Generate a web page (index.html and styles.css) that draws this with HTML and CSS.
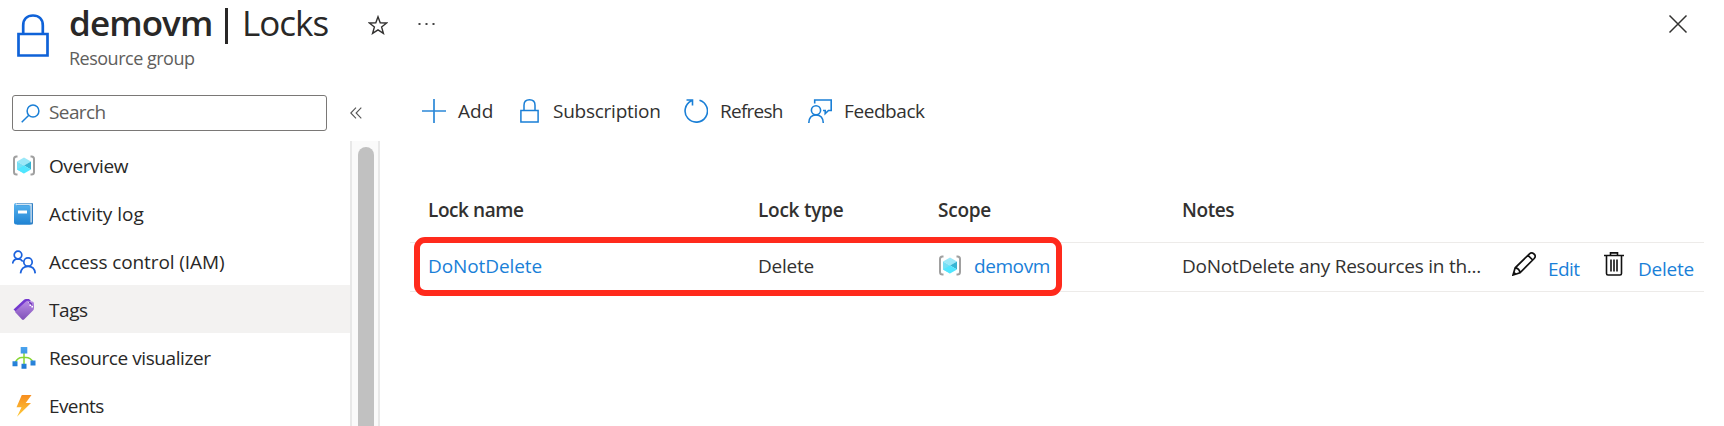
FILE: index.html
```
<!DOCTYPE html>
<html lang="en">
<head>
<meta charset="utf-8">
<title>demovm | Locks</title>
<link rel="stylesheet" href="styles.css">
</head>
<body>
<svg class="defs" width="0" height="0" aria-hidden="true">
  <defs>
    <linearGradient id="book" x1="0" y1="0" x2="0" y2="1"><stop offset="0" stop-color="#5ab4ef"/><stop offset="1" stop-color="#1f83d3"/></linearGradient>
    <linearGradient id="tag" x1="0" y1="0" x2="0" y2="1"><stop offset="0" stop-color="#b98ce6"/><stop offset="1" stop-color="#8050b8"/></linearGradient>
    <linearGradient id="node" x1="0" y1="0" x2="0" y2="1"><stop offset="0" stop-color="#4ba3ee"/><stop offset="1" stop-color="#1b77d2"/></linearGradient>
    <linearGradient id="bolt" x1="0" y1="0" x2="0" y2="1"><stop offset="0" stop-color="#f78d1e"/><stop offset="1" stop-color="#fecb3a"/></linearGradient>
    <symbol id="group" viewBox="0 0 24 24">
      <path d="M5.5 2.5H4.500Q2 2.500 2 5V18Q2 20.500 4.500 20.500H5.500M18.500 2.500H19.500Q22 2.500 22 5V18Q22 20.500 19.500 20.500H18.500" fill="none" stroke="#a0a0a0" stroke-width="2"/>
      <path d="M12 3.500 19 7.500 12 11.500 5 7.500Z" fill="#9be8f8"/>
      <path d="M5 7.500 12 11.500V19.500L5 15.500Z" fill="#76dff5"/>
      <path d="M12 11.500 19 7.500V15.500Z" fill="#35b5d4"/>
      <path d="M5 15.500 12 11.500 19 15.500 12 19.500Z" fill="#50e6ff"/>
    </symbol>
    <symbol id="padlock" viewBox="0 0 19 24">
      <path d="M.9 11.500H18.100V23.100H.9ZM4 11.500V6.200Q4 .8 9.500 .8T15 6.200V11.500" fill="none" stroke="currentColor" stroke-width="1.500"/>
    </symbol>
  </defs>
</svg>

<header class="header">
  <svg class="header-icon" viewBox="0 0 32 43"><path d="M1.500 20H30.500V41.500H1.500ZM6.200 20V11.500C6.200 5.500 10 1.500 16 1.500S25.800 5.500 25.800 11.500V20" fill="none" stroke="#0f62d8" stroke-width="2.700"/></svg>
  <div class="heading">
    <h1 class="title"><span class="title-name">demovm</span><span class="title-bar"></span><span class="title-page">Locks</span></h1>
    <p class="subtitle">Resource group</p>
  </div>
  <svg class="star" viewBox="0 0 20 20"><path d="M10 1.800 12.200 7.700 18.700 8 13.600 12 15.400 18.400 10 14.800 4.600 18.400 6.400 12 1.300 8 7.800 7.700Z" fill="none" stroke="#323130" stroke-width="1.400"/></svg>
  <svg class="more" viewBox="0 0 17 4"><path d="M.5 1h2v2h-2zM7.500 1h2v2h-2zM14.500 1h2v2h-2z" fill="#444"/></svg>
  <svg class="close" viewBox="0 0 20 20"><path d="M1.500 1.500 18.500 18.500M18.500 1.500 1.500 18.500" stroke="#323130" stroke-width="1.500"/></svg>
</header>

<div class="content">
  <aside class="sidebar">
    <div class="search-row">
      <div class="search">
        <svg class="search-icon" viewBox="0 0 19 19"><circle cx="12" cy="7" r="5.900" fill="none" stroke="#1a7fd6" stroke-width="1.500"/><path d="M7.800 11.200.7 18.300" stroke="#1a7fd6" stroke-width="1.500"/></svg>
        <span class="tight-3">Search</span>
      </div>
      <svg class="collapse" viewBox="0 0 12 12"><path d="M6 .7.8 6 6 11.300M11.300.7 6.100 6l5.200 5.300" fill="none" stroke="#555" stroke-width="1.100"/></svg>
    </div>
    <div class="nav-area">
      <nav class="nav">
        <a class="nav-item"><svg class="nav-icon" viewBox="0 0 24 24"><use href="#group"/></svg><span class="tight-2">Overview</span></a>
        <a class="nav-item"><svg class="nav-icon" viewBox="0 0 24 24"><path d="M4.500 1H20Q21 1 21 2V21Q21 22.500 19.500 22.500H5Z" fill="#2f7fc4"/><path d="M5.500 1.800H19.800V20.500H17V3H5Z" fill="#d5e3f0"/><path d="M4 3.200H17.500Q18.500 3.200 18.500 4.200V22.500H4Q2 22.500 2 20.500V3Q2 1 4 1Z" fill="url(#book)"/><path d="M4.500 1.800H19.500L18.500 3H3.700Q3.200 2.200 4.500 1.800Z" fill="#d0e4f3"/><path d="M6 8.500H15V11.500H6Z" fill="#fff"/></svg><span>Activity log</span></a>
        <a class="nav-item"><svg class="nav-icon" viewBox="0 0 24 24"><g fill="none" stroke="#1b62dd" stroke-width="1.700"><circle cx="6" cy="5" r="3.800"/><circle cx="16" cy="12" r="4.200"/><path d="M.5 13.500Q1.500 9 6 8.900 9 9 10.800 11.500M8.500 23.300Q9.500 16.500 16 16.400T23.200 23.300"/></g></svg><span class="tight-0">Access control (IAM)</span></a>
        <a class="nav-item nav-item-active"><svg class="nav-icon" viewBox="0 0 24 24"><path d="M1.500 11.500 12 1.800Q12.800 1 14 1H17L19 3 6 15.500Z" fill="#7338cf"/><path d="M3.500 13 14 3.500Q15 2.800 16 2.800L20.500 3.500Q22 4 22 5.500V10Q22 11.500 21 12.500L12 21.500Q11 22.300 10 21.500L3.500 14.500Q2.800 13.700 3.500 13Z" fill="url(#tag)"/><path d="M16 3.500h1.600v1.600H16zM19.400 8h1.600v1.600h-1.600zM17.500 6.500h1.600v1.600h-1.600z" fill="#fff"/><path d="M16.500 3.500 20 6.500" stroke="#6a35b4" stroke-width="1.200"/></svg><span class="tight-2">Tags</span></a>
        <a class="nav-item"><svg class="nav-icon" viewBox="0 0 24 24"><path d="M12 7V18M3 17Q5.500 11.500 10 11.500H14Q18.500 11.500 21 16" fill="none" stroke="#86d633" stroke-width="1.500"/><path d="M8.700 1h6.600v6.600H8.700zM.5 15.300h5v5h-5zM9.500 17.800h5v5h-5zM18.500 14.500h5v5h-5z" fill="url(#node)"/></svg><span class="tight-2">Resource visualizer</span></a>
        <a class="nav-item"><svg class="nav-icon" viewBox="0 0 24 24"><path d="M9.800 1H19.500L13.700 9H19L5 22.800 9.500 13.200H4.500Z" fill="url(#bolt)"/></svg><span class="tight-3">Events</span></a>
      </nav>
      <div class="scrollbar"><div class="thumb"></div></div>
    </div>
  </aside>

  <main class="main">
    <div class="toolbar">
      <a class="tool tool-add"><svg class="tool-icon" viewBox="0 0 24 24"><path d="M0 12H24M12 0V24" stroke="#2b88d8" stroke-width="1.700"/></svg><span>Add</span></a>
      <a class="tool tool-sub"><svg class="tool-lock" viewBox="0 0 19 24"><use href="#padlock"/></svg><span class="tight-1">Subscription</span></a>
      <a class="tool tool-refresh"><svg class="tool-icon" viewBox="0 0 24 24"><path d="M7.500 1.800A11.200 11.200 0 1 0 15.500 1.200M2.500 1H8.500V6.500" fill="none" stroke="#1a7fd6" stroke-width="1.600"/></svg><span class="tight-4">Refresh</span></a>
      <a class="tool tool-feedback"><svg class="tool-icon" viewBox="0 0 24 24"><g fill="none" stroke="#1a7fd6" stroke-width="1.600"><circle cx="8" cy="11.300" r="4.600"/><path d="M.8 24Q1 16 8 16T15.300 24M6.700 4.500V1H23.200V11.500H20.500L17.200 14.600V11.500H15"/></g></svg><span class="tight-2">Feedback</span></a>
    </div>

    <div class="grid">
      <div class="row head">
        <span class="tight-2">Lock name</span><span class="tight-1">Lock type</span><span class="tight-1">Scope</span><span class="tight-2">Notes</span>
      </div>
      <div class="row item">
        <a class="link tight-0">DoNotDelete</a>
        <span class="tight-1">Delete</span>
        <span class="scope"><svg class="scope-icon" viewBox="0 0 24 24"><use href="#group"/></svg><a class="link tight-2">demovm</a></span>
        <span class="tight-1">DoNotDelete any Resources in th...</span>
        <span class="action edit"><svg class="pencil" viewBox="0 0 24 24"><path d="M1 23 3.200 15.800 17.500 1.800Q19.600 0 22 2T22.200 6.500L8 20.800ZM3.200 15.800Q7.500 16.300 8 20.800M16 3.300 20.700 8M1 23 3.500 22 2 20.500Z" fill="none" stroke="#111" stroke-width="1.700"/></svg><a class="link tight-3">Edit</a></span>
        <span class="action"><svg class="trash" viewBox="0 0 20 24"><path d="M0 3.500H20M6.500 3V.9H13.500V3M2.500 3.500V21.500Q2.500 23 4 23H16Q17.500 23 17.500 21.500V3.500M7 7.500V19.500M10 7.500V19.500M13 7.500V19.500" fill="none" stroke="#111" stroke-width="1.600"/></svg><a class="link tight-1">Delete</a></span>
        <div class="highlight"></div>
      </div>
    </div>
  </main>
</div>
</body>
</html>
```
FILE: styles.css
```
* { box-sizing: border-box; }
body {
  margin: 0;
  height: 426px;
  overflow: hidden;
  background: #fff;
  color: #323130;
  font: 19px/26px "Open Sans", "Noto Sans", sans-serif;
}
svg { display: block; flex: none; }
.defs { position: absolute; }
.tight-0 { letter-spacing: -0.1px; }
.tight-1 { letter-spacing: -0.25px; }
.tight-2 { letter-spacing: -0.42px; }
.tight-3 { letter-spacing: -0.6px; }
.tight-4 { letter-spacing: -0.75px; }

.header { display: flex; height: 94px; padding-left: 17px; align-items: flex-start; }
.header-icon { width: 32px; height: 43px; margin-top: 14px; }
.heading { width: 299px; margin-left: 20px; }
.title {
  display: flex;
  margin: 0;
  height: 45px;
  color: #292827;
  font-size: 35px;
  line-height: 46px;
  font-weight: 400;
}
.title-name { width: 156px; font-weight: 600; letter-spacing: -0.9px; }
.title-bar { width: 3px; height: 36px; margin: 8px 14px 0 0; background: #292827; }
.title-page { letter-spacing: -1px; }
.subtitle { margin: 0; color: #605e5c; font-size: 18px; letter-spacing: -0.5px; }
.star { width: 20px; height: 20px; margin-top: 15px; }
.more { width: 17px; height: 4px; margin: 22px 0 0 30px; }
.close { width: 20px; height: 20px; margin: 14px 36px 0 auto; }

.content { display: flex; height: 332px; }
.sidebar { width: 380px; }
.search-row { display: flex; height: 47px; padding-left: 12px; }
.search {
  display: flex;
  align-items: center;
  width: 315px;
  height: 36px;
  margin-top: 1px;
  padding-left: 8px;
  border: 1px solid #7a7876;
  border-radius: 3px;
  color: #605e5c;
}
.search-icon { width: 19px; height: 19px; margin-right: 9px; }
.search span { margin-top: -2px; }
.collapse { width: 12px; height: 12px; margin: 13px 0 0 23px; }
.nav-area { display: flex; height: 285px; overflow: hidden; }
.nav { width: 350px; color: #292827; }
.nav-item { display: flex; align-items: center; height: 48px; padding: 2px 0 0 12px; gap: 13px; }
.nav-item-active { background: #f3f2f1; }
.nav-icon { width: 24px; height: 24px; }
.scrollbar {
  width: 30px;
  padding: 6px 6px 0;
  background: #fafafa;
  border: solid #e8e8e8;
  border-width: 0 2px;
}
.thumb { width: 16px; height: 300px; border-radius: 8px; background: #c1c1c1; }

.main { width: 1344px; padding: 0 20px 0 30px; }
.toolbar { display: flex; height: 99px; padding-left: 12px; align-items: flex-start; }
.tool { display: flex; align-items: center; height: 34px; }
.tool-icon { width: 24px; height: 24px; }
.tool-lock { width: 19px; height: 24px; color: #1a7fd6; }
.tool-add { width: 98px; gap: 12px; }
.tool-sub { width: 164px; gap: 14px; }
.tool-refresh { width: 124px; gap: 12px; }
.tool-feedback { gap: 12px; }

.grid { width: 1294px; }
.row {
  display: grid;
  grid-template-columns: 330px 180px 244px 330px 92px 100px;
  align-items: center;
  padding-left: 18px;
}
.head { height: 49px; padding-bottom: 16px; font-weight: 600; }
.item {
  position: relative;
  height: 50px;
  padding-bottom: 2px;
  border-top: 1px solid #edebe9;
  border-bottom: 1px solid #edebe9;
  white-space: nowrap;
}
.link { color: #1a80d8; }
.scope { display: flex; align-items: center; gap: 12px; }
.scope-icon { width: 24px; height: 24px; }
.action { display: flex; align-items: flex-start; }
.action .link { padding-top: 5px; }
.pencil { width: 24px; height: 24px; margin: 1px 12px 0 0; }
.trash { width: 20px; height: 24px; margin: 1px 14px 0 0; }
.highlight {
  position: absolute;
  left: 4px;
  top: -6px;
  width: 648px;
  height: 59px;
  border: 6px solid #ff2a1c;
  border-radius: 11px;
}
```
